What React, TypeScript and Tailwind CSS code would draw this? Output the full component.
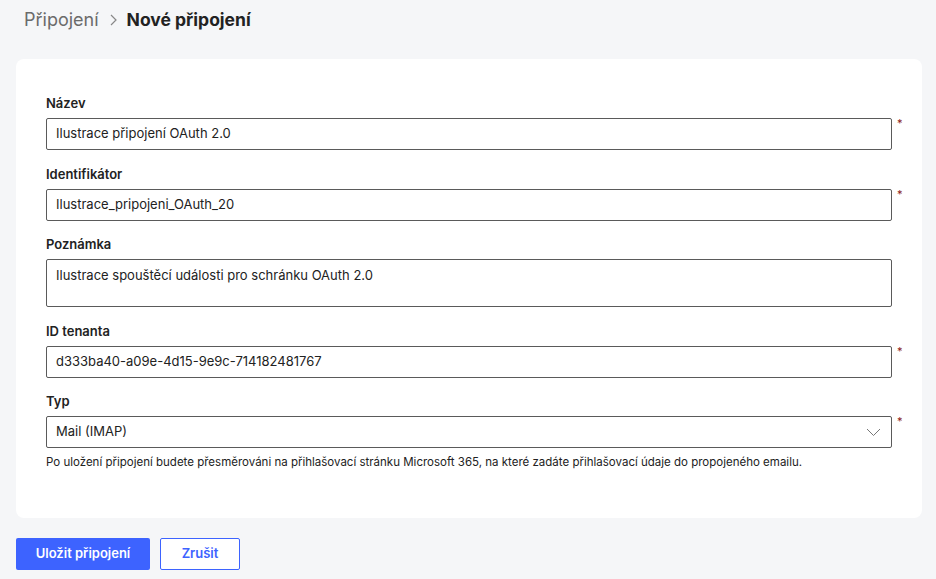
import React from 'react';

function Field({
  label,
  value,
  required,
  multiline,
  select,
}: {
  label: string;
  value: string;
  required?: boolean;
  multiline?: boolean;
  select?: boolean;
}) {
  return (
    <div className="flex flex-col">
      <div className="text-[13px] leading-[18px] font-semibold text-[#222] mb-[6px]">{label}</div>
      <div className="flex items-start">
        <div
          className={
            'flex-1 border border-[#5a5a5a] rounded-[2px] bg-white px-[9px] text-[13px] text-[#222] flex ' +
            (multiline ? 'h-[48px] items-start pt-[6px]' : 'h-[32px] items-center')
          }
        >
          <span className="flex-1">{value}</span>
          {select && (
            <svg width="15" height="9" viewBox="0 0 15 9" fill="none" className="mr-[1px]">
              <path d="M1 1l6.5 6.5L14 1" stroke="#777" strokeWidth="1" />
            </svg>
          )}
        </div>
        <div className="w-[30px] pl-[5px] text-[11px] leading-[11px] text-[#8b1a1a]">
          {required ? '*' : ''}
        </div>
      </div>
    </div>
  );
}

export default function App() {
  return (
    <div
      className="min-h-[579px] bg-[#f5f6f8] pl-[16px] pr-[14px] pt-[8px]"
      style={{ fontFamily: 'Inter, "Noto Sans", sans-serif' }}
    >
      {/* Breadcrumb */}
      <div className="flex items-center h-[24px] pl-[8px] leading-[24px]">
        <span className="text-[18px] text-[#6b6b6b]">Připojení</span>
        <svg width="10" height="12" viewBox="0 0 10 12" className="ml-[10px] mr-[8px]">
          <path d="M2 1l5 5-5 5" stroke="#888" strokeWidth="1.2" fill="none" />
        </svg>
        <span className="text-[17.5px] font-bold text-[#222]">Nové připojení</span>
      </div>

      {/* Card */}
      <div className="mt-[27px] bg-white rounded-[8px] pl-[30px] pt-[35px] pb-[48px]">
        <div className="flex flex-col gap-[14.5px]">
          <Field label="Název" value="Ilustrace připojení OAuth 2.0" required />
          <Field label="Identifikátor" value="Ilustrace_pripojeni_OAuth_20" required />
          <Field label="Poznámka" value="Ilustrace spouštěcí události pro schránku OAuth 2.0" multiline />
          <Field label="ID tenanta" value="d333ba40-a09e-4d15-9e9c-714182481767" required />
          <div>
            <Field label="Typ" value="Mail (IMAP)" required select />
            <div className="mt-[6px] text-[11.5px] leading-[16px] text-[#222]">
              Po uložení připojení budete přesměrováni na přihlašovací stránku Microsoft 365, na které zadáte
              přihlašovací údaje do propojeného emailu.
            </div>
          </div>
        </div>
      </div>

      {/* Actions */}
      <div className="flex gap-[10px] mt-[20px]">
        <button className="h-[32px] w-[134px] rounded-[2px] bg-[#3d63ff] text-white text-[13px] font-semibold">
          Uložit připojení
        </button>
        <button className="h-[32px] w-[80px] rounded-[2px] border border-[#3d63ff] bg-white text-[#3d63ff] text-[13px] font-semibold">
          Zrušit
        </button>
      </div>
    </div>
  );
}
